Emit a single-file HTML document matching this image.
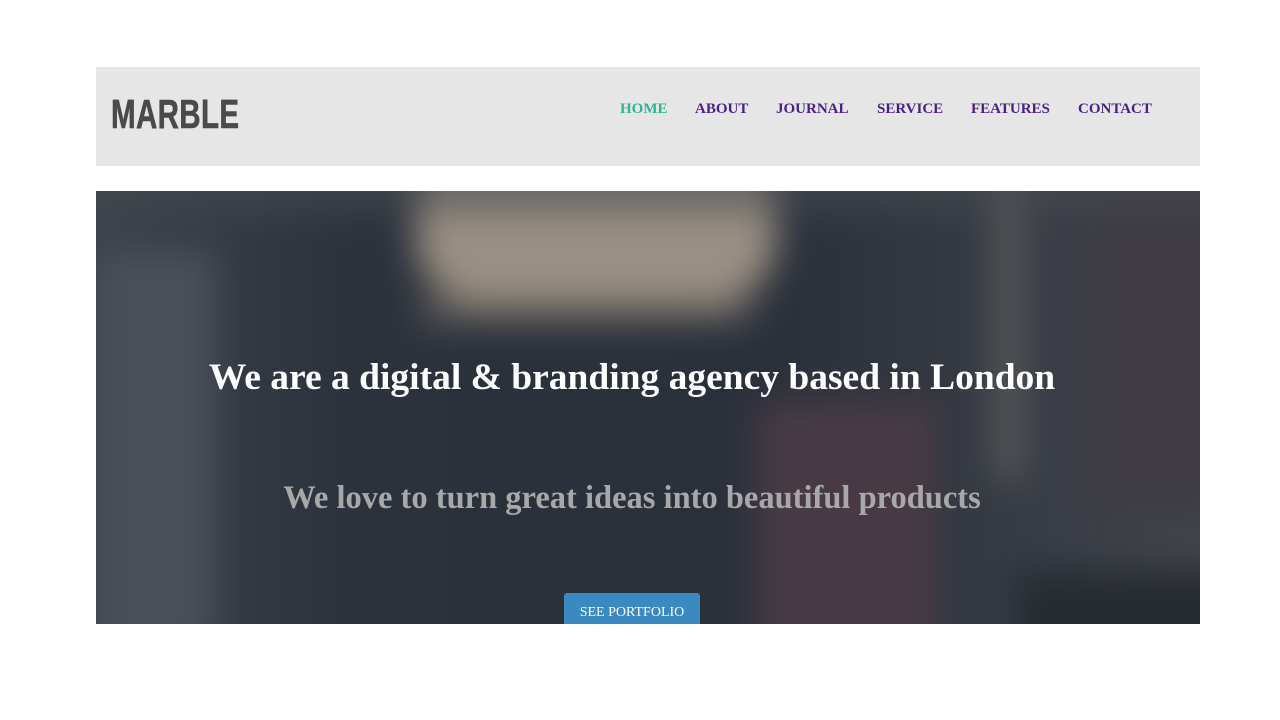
<!DOCTYPE html>
<html><head><style>
*{margin:0;padding:0;box-sizing:border-box}
body{width:1280px;height:720px;background:#fff;position:relative;overflow:hidden;font-family:"Liberation Serif",serif}
.hdr{position:absolute;left:96px;top:67px;width:1104px;height:99px;background:#e6e6e6}
.logo{position:absolute;left:15px;top:24px;font-family:"Liberation Sans",sans-serif;font-weight:bold;font-size:41px;color:#4a4a4a;transform:scaleX(0.72);transform-origin:left top;letter-spacing:0.5px;-webkit-text-stroke:0.6px #4a4a4a}
.nav{position:absolute;top:34px;font-weight:bold;font-size:15px;color:#4b1f86}
.hero{position:absolute;left:96px;top:191px;width:1104px;height:433px;overflow:hidden;background:#2f3540}
.bg{position:absolute;inset:-40px;filter:blur(18px)}
.h1{position:absolute;left:-16px;width:1104px;top:165px;text-align:center;color:#fff;font-weight:bold;font-size:37.5px;white-space:nowrap}
.h2{position:absolute;left:-16px;width:1104px;top:289px;text-align:center;color:#a8a8a8;font-weight:bold;font-size:32.5px;white-space:nowrap}
.btn{position:absolute;left:468px;top:402px;width:136px;height:40px;background:#3a89c0;border-radius:3px;color:#fff;font-size:14px;text-align:center;padding-top:12px}
</style></head><body>
<div class="hdr">
<div class="logo">MARBLE</div>
<div class="nav" style="left:524px;color:#2bb592">HOME</div>
<div class="nav" style="left:599px">ABOUT</div>
<div class="nav" style="left:680px">JOURNAL</div>
<div class="nav" style="left:781px">SERVICE</div>
<div class="nav" style="left:875px">FEATURES</div>
<div class="nav" style="left:982px">CONTACT</div>
</div>
<div class="hero">
<div class="bg">
<div style="position:absolute;left:0;top:0;width:1200px;height:520px;background:linear-gradient(90deg,#3e444c 0%,#2c323c 25%,#2a303a 60%,#3a3e46 85%,#45474d 100%)"></div>
<div style="position:absolute;left:40px;top:100px;width:120px;height:400px;background:#4a5058"></div>
<div style="position:absolute;left:360px;top:0px;width:360px;height:150px;background:#9a8f83;border-radius:0 0 60px 60px"></div>
<div style="position:absolute;left:360px;top:150px;width:340px;height:20px;background:#6a6560;border-radius:0 0 60px 60px"></div>
<div style="position:absolute;left:700px;top:250px;width:180px;height:300px;background:#473a45"></div>
<div style="position:absolute;left:940px;top:0;width:24px;height:330px;background:#5e5e5e"></div>
<div style="position:absolute;left:1040px;top:0;width:200px;height:360px;background:#3e3b42"></div>
<div style="position:absolute;left:960px;top:420px;width:280px;height:120px;background:#262a31"></div>
<div style="position:absolute;left:0;top:0;width:1200px;height:60px;background:#474b52;opacity:.6"></div>
</div>
<div class="h1">We are a digital &amp; branding agency based in London</div>
<div class="h2">We love to turn great ideas into beautiful products</div>
<div class="btn">SEE PORTFOLIO</div>
</div>
</body></html>
